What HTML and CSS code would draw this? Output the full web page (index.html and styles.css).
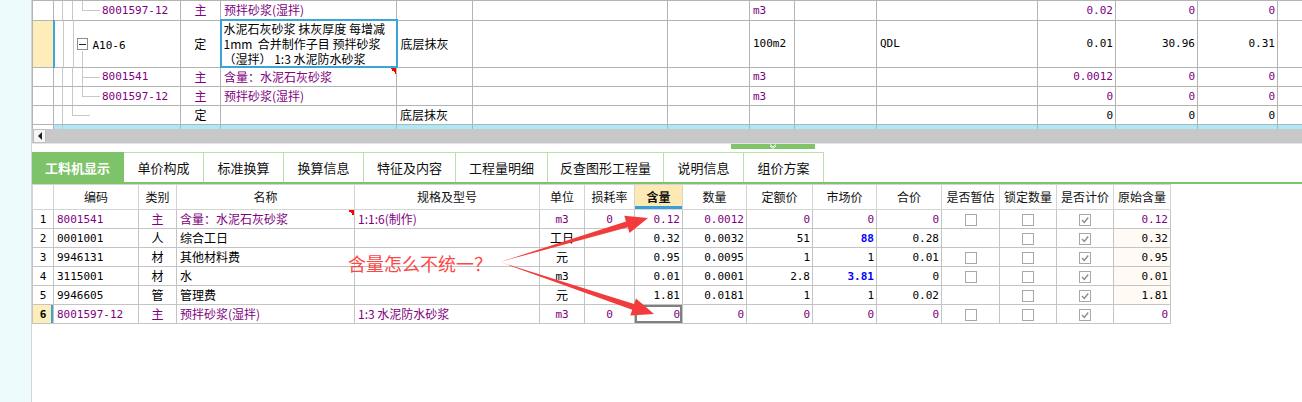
FILE: index.html
```html
<!DOCTYPE html>
<html lang="zh-CN">
<head>
<meta charset="utf-8">
<title>工料机显示</title>
<link rel="stylesheet" href="styles.css">
</head>
<body>
<div class="page">
  <div class="strip"></div>
  <div class="main">
    <div class="top">
      <table class="grid top-grid">
        <colgroup>
          <col style="width:21px"><col style="width:127px"><col style="width:40px"><col style="width:176px">
          <col style="width:76px"><col style="width:195px"><col style="width:82px"><col style="width:45px">
          <col style="width:82px"><col style="width:161px"><col style="width:78px"><col style="width:82px">
          <col style="width:80px"><col style="width:60px">
        </colgroup>
        <tbody>
          <tr>
            <td class="sel"></td>
            <td class="tree t-last m p">8001597-12</td>
            <td class="c p">主</td>
            <td class="p">预拌砂浆(湿拌)</td>
            <td></td><td></td><td></td>
            <td class="m p">m3</td>
            <td></td><td></td>
            <td class="m r p">0.02</td><td class="m r p">0</td><td class="m r p">0</td>
            <td></td>
          </tr>
          <tr class="tall">
            <td class="sel cur"></td>
            <td class="tree t-parent"><span class="fold"></span><span class="mono">A10-6</span></td>
            <td class="c">定</td>
            <td class="edit">水泥石灰砂浆 抹灰厚度 每增减<br>1mm&nbsp; 合并制作子目 预拌砂浆<br>（湿拌） 1:3 水泥防水砂浆</td>
            <td>底层抹灰</td>
            <td></td><td></td>
            <td class="m">100m2</td>
            <td></td>
            <td class="m">QDL</td>
            <td class="m r">0.01</td><td class="m r">30.96</td><td class="m r">0.31</td>
            <td></td>
          </tr>
          <tr>
            <td class="sel"></td>
            <td class="tree t-mid m p">8001541</td>
            <td class="c p">主</td>
            <td class="p flag">含量：水泥石灰砂浆</td>
            <td></td><td></td><td></td>
            <td class="m p">m3</td>
            <td></td><td></td>
            <td class="m r p">0.0012</td><td class="m r p">0</td><td class="m r p">0</td>
            <td></td>
          </tr>
          <tr>
            <td class="sel"></td>
            <td class="tree t-last m p">8001597-12</td>
            <td class="c p">主</td>
            <td class="p">预拌砂浆(湿拌)</td>
            <td></td><td></td><td></td>
            <td class="m p">m3</td>
            <td></td><td></td>
            <td class="m r p">0</td><td class="m r p">0</td><td class="m r p">0</td>
            <td></td>
          </tr>
          <tr>
            <td class="sel"></td>
            <td class="tree t-end"></td>
            <td class="c">定</td>
            <td></td>
            <td>底层抹灰</td>
            <td></td><td></td><td></td><td></td><td></td>
            <td class="m r">0</td><td class="m r">0</td><td class="m r">0</td>
            <td></td>
          </tr>
          <tr class="hl">
            <td class="sel"></td>
            <td class="tree t-next"></td>
            <td class="c"></td>
            <td></td><td></td><td></td><td></td><td></td><td></td><td></td><td></td><td></td><td></td><td></td>
          </tr>
        </tbody>
      </table>
    </div>
    <div class="hscroll"><span class="sb-btn"><span class="tri"></span></span></div>
    <div class="splitter">
      <span class="handle">
        <svg width="10" height="5" viewBox="0 0 10 5"><polyline points="2,0.5 5,3 8,0.5" fill="none" stroke="#fff" stroke-width="1"/><polyline points="2,2 5,4.5 8,2" fill="none" stroke="#fff" stroke-width="1"/></svg>
      </span>
    </div>
    <div class="tabs">
      <div class="tab active w92">工料机显示</div>
      <div class="tab w80">单价构成</div>
      <div class="tab w80">标准换算</div>
      <div class="tab w80">换算信息</div>
      <div class="tab w92">特征及内容</div>
      <div class="tab w92">工程量明细</div>
      <div class="tab w116">反查图形工程量</div>
      <div class="tab w80">说明信息</div>
      <div class="tab w80">组价方案</div>
    </div>
    <table class="grid bottom-grid">
      <colgroup>
        <col style="width:21px"><col style="width:85px"><col style="width:38px"><col style="width:178px">
        <col style="width:185px"><col style="width:45px"><col style="width:50px"><col style="width:48px">
        <col style="width:64px"><col style="width:66px"><col style="width:64px"><col style="width:65px">
        <col style="width:58px"><col style="width:57px"><col style="width:57px"><col style="width:57px">
      </colgroup>
      <thead>
        <tr>
          <th></th><th>编码</th><th>类别</th><th>名称</th><th>规格及型号</th><th>单位</th><th>损耗率</th>
          <th class="hot">含量</th><th>数量</th><th>定额价</th><th>市场价</th><th>合价</th>
          <th>是否暂估</th><th>锁定数量</th><th>是否计价</th><th>原始含量</th>
        </tr>
      </thead>
      <tbody>
        <tr class="p">
          <td class="idx">1</td><td class="m">8001541</td><td class="c">主</td><td class="flag">含量：水泥石灰砂浆</td>
          <td>1:1:6(制作)</td><td class="m c">m3</td><td class="m c">0</td><td class="m r">0.12</td>
          <td class="m r">0.0012</td><td class="m r">0</td><td class="m r">0</td><td class="m r">0</td>
          <td class="c"><span class="cb"></span></td><td class="c"><span class="cb"></span></td>
          <td class="c"><span class="cb"><svg width="10" height="10" viewBox="0 0 10 10"><polyline points="2,5 4.3,7.5 8.2,2.5" fill="none" stroke="#8c8c8c" stroke-width="1.4"/></svg></span></td>
          <td class="m r">0.12</td>
        </tr>
        <tr>
          <td class="idx">2</td><td class="m">0001001</td><td class="c">人</td><td>综合工日</td>
          <td></td><td class="c">工日</td><td></td><td class="m r">0.32</td>
          <td class="m r">0.0032</td><td class="m r">51</td><td class="m r blue">88</td><td class="m r">0.28</td>
          <td></td><td class="c"><span class="cb"></span></td>
          <td class="c"><span class="cb"><svg width="10" height="10" viewBox="0 0 10 10"><polyline points="2,5 4.3,7.5 8.2,2.5" fill="none" stroke="#8c8c8c" stroke-width="1.4"/></svg></span></td>
          <td class="m r orig">0.32</td>
        </tr>
        <tr>
          <td class="idx">3</td><td class="m">9946131</td><td class="c">材</td><td>其他材料费</td>
          <td></td><td class="c">元</td><td></td><td class="m r">0.95</td>
          <td class="m r">0.0095</td><td class="m r">1</td><td class="m r">1</td><td class="m r">0.01</td>
          <td class="c"><span class="cb"></span></td><td class="c"><span class="cb"></span></td>
          <td class="c"><span class="cb"><svg width="10" height="10" viewBox="0 0 10 10"><polyline points="2,5 4.3,7.5 8.2,2.5" fill="none" stroke="#8c8c8c" stroke-width="1.4"/></svg></span></td>
          <td class="m r orig">0.95</td>
        </tr>
        <tr>
          <td class="idx">4</td><td class="m">3115001</td><td class="c">材</td><td>水</td>
          <td></td><td class="m c">m3</td><td></td><td class="m r">0.01</td>
          <td class="m r">0.0001</td><td class="m r">2.8</td><td class="m r blue">3.81</td><td class="m r">0</td>
          <td class="c"><span class="cb"></span></td><td class="c"><span class="cb"></span></td>
          <td class="c"><span class="cb"><svg width="10" height="10" viewBox="0 0 10 10"><polyline points="2,5 4.3,7.5 8.2,2.5" fill="none" stroke="#8c8c8c" stroke-width="1.4"/></svg></span></td>
          <td class="m r orig">0.01</td>
        </tr>
        <tr>
          <td class="idx">5</td><td class="m">9946605</td><td class="c">管</td><td>管理费</td>
          <td></td><td class="c">元</td><td></td><td class="m r">1.81</td>
          <td class="m r">0.0181</td><td class="m r">1</td><td class="m r">1</td><td class="m r">0.02</td>
          <td></td><td class="c"><span class="cb"></span></td>
          <td class="c"><span class="cb"><svg width="10" height="10" viewBox="0 0 10 10"><polyline points="2,5 4.3,7.5 8.2,2.5" fill="none" stroke="#8c8c8c" stroke-width="1.4"/></svg></span></td>
          <td class="m r orig">1.81</td>
        </tr>
        <tr class="p">
          <td class="idx cur">6</td><td class="m">8001597-12</td><td class="c">主</td><td>预拌砂浆(湿拌)</td>
          <td>1:3 水泥防水砂浆</td><td class="m c">m3</td><td class="m c">0</td><td class="m r focus">0</td>
          <td class="m r">0</td><td class="m r">0</td><td class="m r">0</td><td class="m r">0</td>
          <td class="c"><span class="cb"></span></td><td class="c"><span class="cb"></span></td>
          <td class="c"><span class="cb"><svg width="10" height="10" viewBox="0 0 10 10"><polyline points="2,5 4.3,7.5 8.2,2.5" fill="none" stroke="#8c8c8c" stroke-width="1.4"/></svg></span></td>
          <td class="m r">0</td>
        </tr>
      </tbody>
    </table>
  </div>
  <div class="note">
    <svg class="arrows" width="1302" height="402" viewBox="0 0 1302 402">
      <polygon points="500,262 626.0,221.4 624.3,215.7 648,218 629.5,232.9 627.8,227.2" fill="#f23c3c"/>
      <polygon points="500,262 634.1,304.1 636.0,298.4 654,314 630.3,315.5 632.2,309.8" fill="#f23c3c"/>
    </svg>
    <div class="note-text">含量怎么不统一？</div>
  </div>
</div>
</body>
</html>
```

FILE: styles.css
```css
* { box-sizing: border-box; }
html, body { margin: 0; padding: 0; background: #fff; }
body {
  width: 1302px;
  height: 402px;
  overflow: hidden;
  font: 12px "Noto Sans CJK SC", "Liberation Sans", sans-serif;
  color: #000;
}
.page { position: relative; display: flex; width: 1302px; height: 402px; }
.strip { flex: none; width: 32px; background: #eefbfd; border-right: 1px solid #d6d6d6; }
.main { flex: 1; min-width: 0; overflow: hidden; display: flex; flex-direction: column; }

/* generic grid */
table.grid { border-collapse: collapse; table-layout: fixed; }
table.grid td, table.grid th {
  box-sizing: content-box;
  height: 18px;
  padding: 0 3px;
  line-height: 18px;
  white-space: nowrap;
  overflow: hidden;
  text-align: left;
  font-weight: normal;
}
table.grid .m, .mono { font: 11px "DejaVu Sans Mono", monospace; }
table.grid .c { text-align: center; }
table.grid .r { text-align: right; padding-right: 2px; }
.p, .p td { color: #800080; }
table.grid .blue { color: #0000ff; font-weight: bold; }
.flag {
  background: linear-gradient(to bottom left, #ff0000 50%, transparent 50%) right top / 6px 6px no-repeat;
}

/* top grid */
.top { flex: none; height: 129px; overflow: hidden; }
.top-grid { width: 1305px; }
table.top-grid td { border: 1px solid #b4b4b4; }
table.top-grid tr.tall td { height: 46px; }
table.top-grid td.sel { padding: 0; }
table.top-grid td.sel.cur { background: #feedb8; border-right: 2px solid #3ba4d8; }
table.top-grid tr.tall td.edit {
  border: 2px solid #3ba4d8;
  white-space: normal;
  height: 45px;
  line-height: 15px;
  padding: 0 2px;
}
table.top-grid tr.hl td { background: #ade8f8; }
table.top-grid tr.hl td.sel { background: #fff; }

/* tree connector lines */
table.top-grid td.tree { padding-left: 48px; }
.t-last {
  background:
    linear-gradient(#c8c8c8, #c8c8c8) 8px 0 / 1px 100% no-repeat,
    linear-gradient(#c8c8c8, #c8c8c8) 18px 0 / 1px 100% no-repeat,
    linear-gradient(#c8c8c8, #c8c8c8) 28px 0 / 1px 10px no-repeat,
    linear-gradient(#c8c8c8, #c8c8c8) 28px 9px / 18px 1px no-repeat;
}
.t-mid {
  background:
    linear-gradient(#c8c8c8, #c8c8c8) 8px 0 / 1px 100% no-repeat,
    linear-gradient(#c8c8c8, #c8c8c8) 18px 0 / 1px 100% no-repeat,
    linear-gradient(#c8c8c8, #c8c8c8) 28px 0 / 1px 100% no-repeat,
    linear-gradient(#c8c8c8, #c8c8c8) 28px 9px / 18px 1px no-repeat;
}
table.top-grid td.t-parent {
  padding-left: 22px;
  background:
    linear-gradient(#c8c8c8, #c8c8c8) 8px 0 / 1px 100% no-repeat,
    linear-gradient(#c8c8c8, #c8c8c8) 18px 0 / 1px 100% no-repeat,
    linear-gradient(#c8c8c8, #c8c8c8) 27px 30px / 1px 100% no-repeat;
}
.t-end {
  background:
    linear-gradient(#c8c8c8, #c8c8c8) 8px 0 / 1px 100% no-repeat,
    linear-gradient(#c8c8c8, #c8c8c8) 18px 0 / 1px 10px no-repeat,
    linear-gradient(#c8c8c8, #c8c8c8) 18px 9px / 18px 1px no-repeat;
}
table.top-grid tr.hl td.t-next {
  background:
    linear-gradient(#c8c8c8, #c8c8c8) 8px 0 / 1px 100% no-repeat,
    #ade8f8;
}
.fold {
  display: inline-block;
  vertical-align: middle;
  width: 11px;
  height: 12px;
  margin: -2px 5px 0 0;
  border: 1px solid #8c8c8c;
  background: linear-gradient(#222, #222) center / 7px 1px no-repeat, #fff;
}

/* horizontal scrollbar */
.hscroll {
  flex: none;
  height: 15px;
  background: #c8c8c8;
  border-bottom: 1px solid #e4e4e4;
  display: flex;
  align-items: flex-start;
}
.sb-btn {
  width: 13px;
  height: 14px;
  margin-left: 1px;
  background: #f6f6f6;
  border: 1px solid #bdbdbd;
  display: flex;
  align-items: center;
  justify-content: center;
}
.tri { width: 0; height: 0; border-right: 4px solid #222; border-top: 4px solid transparent; border-bottom: 4px solid transparent; }

/* splitter */
.splitter { flex: none; height: 8px; display: flex; align-items: flex-start; }
.handle {
  margin-left: 699px;
  width: 84px;
  height: 5px;
  background: #80c46a;
  display: flex;
  justify-content: center;
  align-items: flex-start;
}
.handle svg { display: block; }

/* tabs */
.tabs {
  flex: none;
  height: 32px;
  display: flex;
  border-bottom: 2px solid #7dc36a;
}
.tab {
  height: 30px;
  display: flex;
  align-items: center;
  justify-content: center;
  border-top: 1px solid #b9e2ab;
  border-right: 1px solid #b9e2ab;
  font-size: 13px;
  color: #111;
}
.tab.active { background: #7dc36a; border-color: #7dc36a; color: #fff; font-weight: bold; }
.w80 { width: 80px; }
.w92 { width: 92px; }
.w116 { width: 116px; }

/* bottom grid */
.bottom-grid { width: 1138px; flex: none; }
table.bottom-grid th {
  height: 24px;
  line-height: 24px;
  border: 1px solid #d4d4d4;
  text-align: center;
  color: #111;
}
table.bottom-grid th.hot {
  background: #fde9b3;
  font-weight: bold;
  box-shadow: inset 0 -3px 0 #38a0d8;
}
table.bottom-grid td { border: 1px solid #c4c4c4; }
table.bottom-grid td.idx { text-align: center; padding: 0; font: 11px "DejaVu Sans Mono", monospace; color: #000; }
table.bottom-grid td.idx.cur { background: #fdedb8; font-weight: bold; box-shadow: inset -2px 0 0 #3ba4d8; }
table.bottom-grid td.orig { background: #fffaf4; }
table.bottom-grid td.focus { box-shadow: inset 0 0 0 2px #808080; }
.cb {
  display: inline-block;
  vertical-align: middle;
  width: 12px;
  height: 12px;
  margin-top: -2px;
  border: 1px solid #a8a8a8;
  background: #fff;
}
.cb svg { display: block; }

/* annotation */
.note { position: absolute; left: 0; top: 0; width: 1302px; height: 402px; pointer-events: none; }
.arrows { position: absolute; left: 0; top: 0; }
.note-text {
  position: absolute;
  left: 348px;
  top: 253px;
  font-size: 18px;
  line-height: 20px;
  color: #ff4646;
  white-space: nowrap;
}
```
